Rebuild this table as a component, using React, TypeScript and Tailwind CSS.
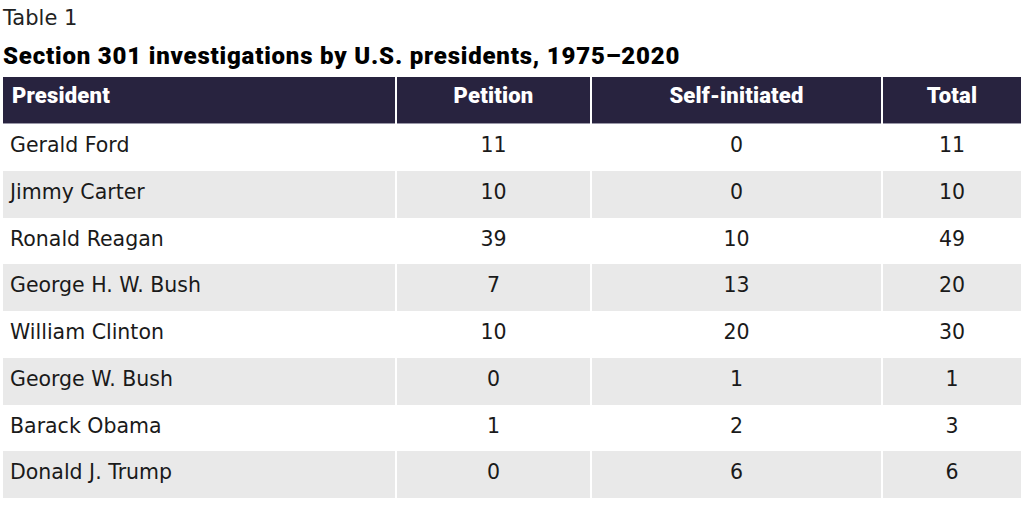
import React from 'react';

const rows = [
    ["Gerald Ford", "11", "0", "11"],
    ["Jimmy Carter", "10", "0", "10"],
    ["Ronald Reagan", "39", "10", "49"],
    ["George H. W. Bush", "7", "13", "20"],
    ["William Clinton", "10", "20", "30"],
    ["George W. Bush", "0", "1", "1"],
    ["Barack Obama", "1", "2", "3"],
    ["Donald J. Trump", "0", "6", "6"],
];

const cols = "grid grid-cols-[392px_193px_289px_138px] gap-x-[2px]";

export default function App() {
    return (
        <div className="w-[1024px] h-[512px] bg-white pl-[3px] font-['DejaVu_Sans',sans-serif] text-[#1a1a1a]">
            <div className="pt-[6px] text-[21px] leading-[24px] text-[#222]">Table 1</div>
            <h1 className="mt-[12px] text-[24px] leading-[28px] font-black tracking-[0.8px] text-black font-['Roboto',sans-serif]">
                Section 301 investigations by U.S. presidents, 1975–2020
            </h1>
            <div className={`${cols} mt-[7px] h-[47px] text-white font-black tracking-[0.2px] font-['Roboto',sans-serif] text-[22px] leading-[28px]`}>
                <div className="bg-[#28233f] border-b border-[#9a98a8] pt-[5px] pl-[9px]">President</div>
                <div className="bg-[#28233f] border-b border-[#9a98a8] pt-[5px] text-center">Petition</div>
                <div className="bg-[#28233f] border-b border-[#9a98a8] pt-[5px] text-center">Self-initiated</div>
                <div className="bg-[#28233f] border-b border-[#9a98a8] pt-[5px] text-center">Total</div>
            </div>
            {rows.map((r, i) => (
                <div key={i} className={`${cols} h-[46.75px] text-[20.5px] leading-[24px]`}>
                    {r.map((c, j) => (
                        <div
                            key={j}
                            className={`${i % 2 === 1 ? "bg-[#e9e9e9]" : "bg-white"} pt-[9px] ${j === 0 ? "pl-[7px]" : "text-center"}`}
                        >
                            {c}
                        </div>
                    ))}
                </div>
            ))}
        </div>
    );
}
